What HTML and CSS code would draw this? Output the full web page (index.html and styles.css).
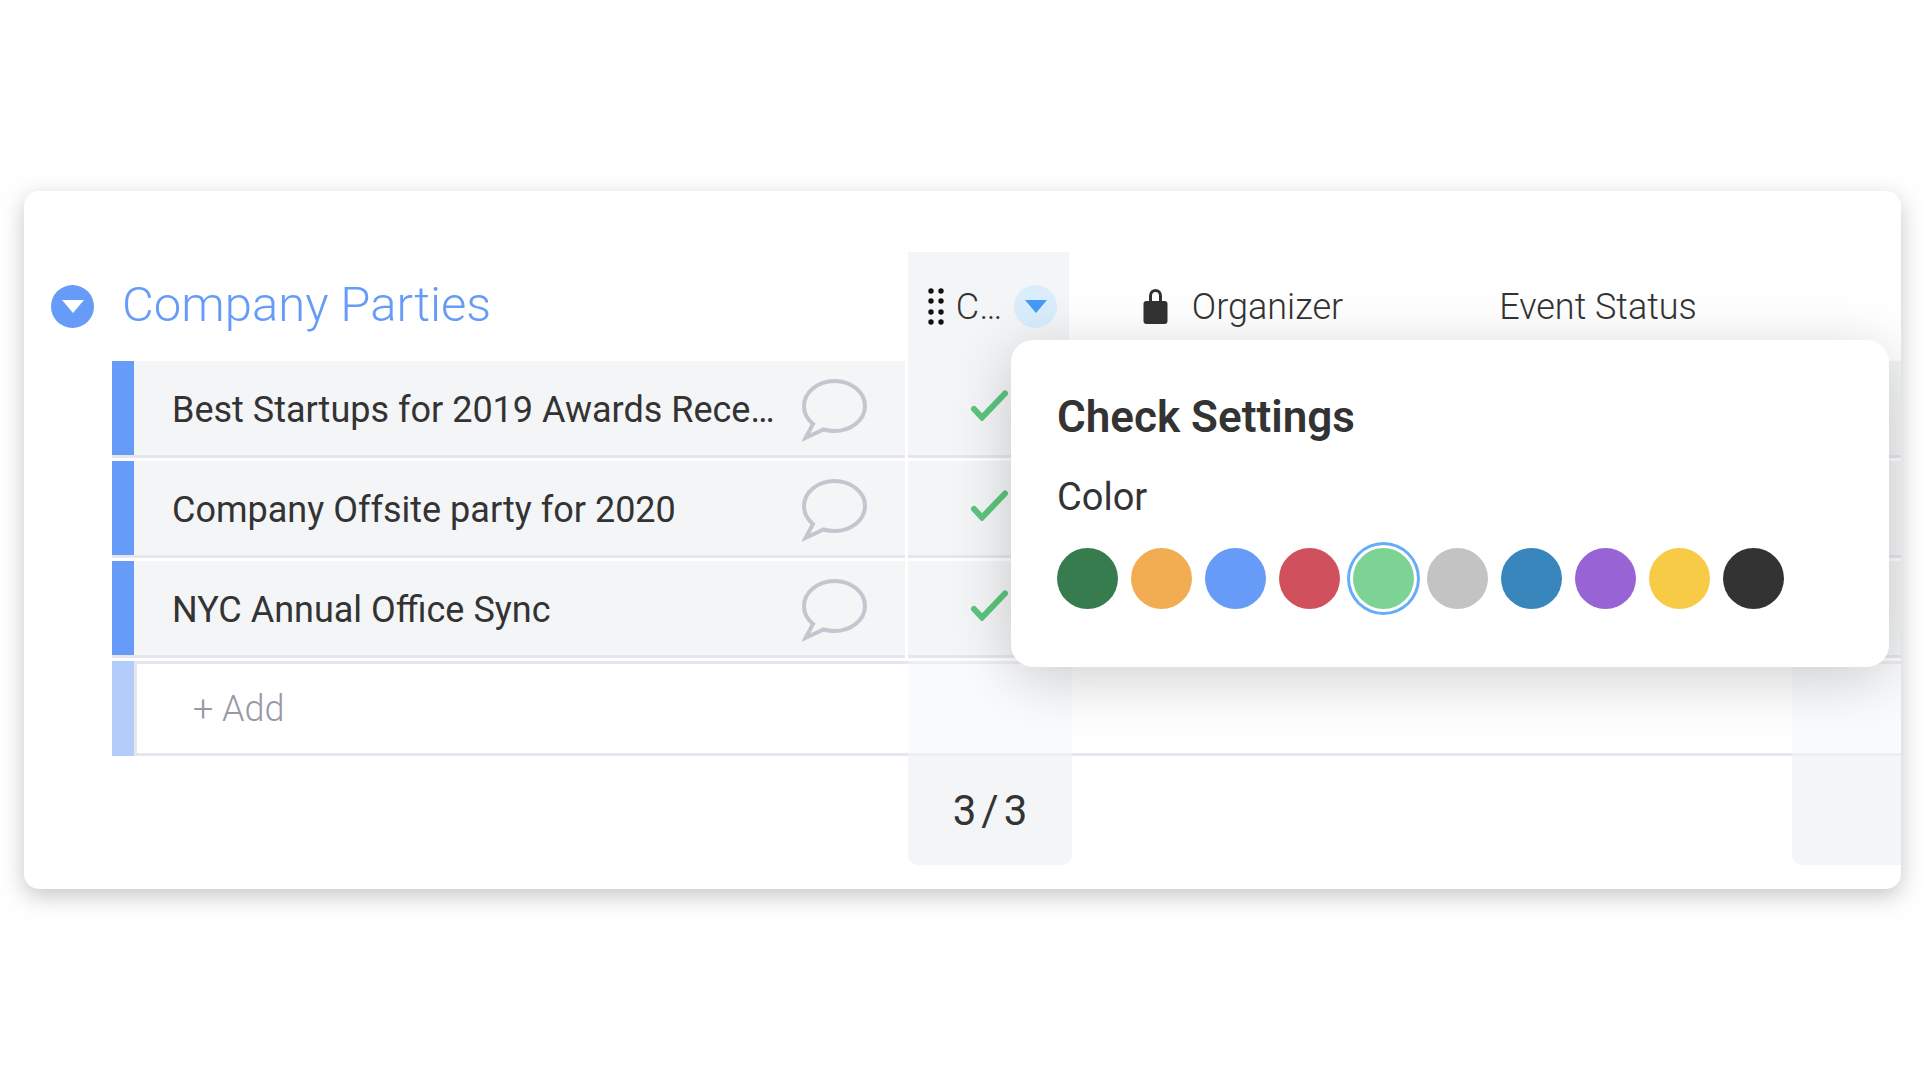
FILE: index.html
```html
<!DOCTYPE html>
<html lang="en">
<head>
    <meta charset="UTF-8">
    <title>Company Parties</title>
    <link rel="stylesheet" href="styles.css">
</head>
<body>

    <svg class="sprite" width="0" height="0">
        <symbol id="bubble" viewBox="0 0 65 63">
            <path d="M11 45 C5 40 2 34 2 27 C2 13 16 2 32.500 2 C49 2 63 13 63 27 C63 41 49 52 32.500 52 C28.500 52 25 51.500 21.500 50.500 L3.500 59 Z" fill="none" stroke="#c4c6cf" stroke-width="4"/>
        </symbol>
        <symbol id="check" viewBox="0 0 38 31">
            <path d="M4 19 L12 27.500 L35 3.500" fill="none" stroke="#5bc57d" stroke-width="6" stroke-linecap="round"/>
        </symbol>
    </svg>

    <main class="board">
        <table class="group">
            <colgroup>
                <col class="col-gutter">
                <col class="col-bar">
                <col class="col-name">
                <col class="col-check">
                <col class="col-organizer">
                <col class="col-status">
                <col class="col-last">
            </colgroup>
            <thead>
                <tr>
                    <th colspan="3">
                        <div class="group-title">
                            <button class="round-btn toggle" aria-label="Collapse group">
                                <svg width="24" height="13" viewBox="0 0 24 13"><path d="M1 0 H23 L12 13 Z" fill="#fff"/></svg>
                            </button>
                            <h1>Company Parties</h1>
                        </div>
                    </th>
                    <th class="head-check">
                        <div class="head">
                            <svg class="drag" width="16" height="38" viewBox="0 0 16 38" fill="#111">
                                <circle cx="3" cy="3" r="2.700"/><circle cx="13" cy="3" r="2.700"/>
                                <circle cx="3" cy="13" r="2.700"/><circle cx="13" cy="13" r="2.700"/>
                                <circle cx="3" cy="24" r="2.700"/><circle cx="13" cy="24" r="2.700"/>
                                <circle cx="3" cy="34" r="2.700"/><circle cx="13" cy="34" r="2.700"/>
                            </svg>
                            <span>C…</span>
                            <button class="round-btn menu" aria-label="Column menu">
                                <svg width="24" height="13" viewBox="0 0 24 13"><path d="M1 0 H23 L12 13 Z" fill="#449af6"/></svg>
                            </button>
                        </div>
                    </th>
                    <th>
                        <div class="head organizer">
                            <svg width="25" height="37" viewBox="0 0 25 37">
                                <path d="M7.500 15 V8 C7.500 0.500 17.500 0.500 17.500 8 V15" fill="none" stroke="#333" stroke-width="3"/>
                                <rect x="0.500" y="13" width="24" height="23" rx="3" fill="#333"/>
                            </svg>
                            <span>Organizer</span>
                        </div>
                    </th>
                    <th><div class="head">Event Status</div></th>
                    <th></th>
                </tr>
            </thead>
            <tbody>
                <tr class="item">
                    <td></td>
                    <td class="bar"></td>
                    <td class="cell">
                        <div class="name">
                            <span>Best Startups for 2019 Awards Rece…</span>
                            <button class="chat" aria-label="Open updates"><svg width="65" height="63"><use href="#bubble"/></svg></button>
                        </div>
                    </td>
                    <td class="cell tick"><svg width="38" height="31"><use href="#check"/></svg></td>
                    <td class="cell"></td>
                    <td class="cell"></td>
                    <td class="cell"></td>
                </tr>
                <tr class="item">
                    <td></td>
                    <td class="bar"></td>
                    <td class="cell">
                        <div class="name">
                            <span>Company Offsite party for 2020</span>
                            <button class="chat" aria-label="Open updates"><svg width="65" height="63"><use href="#bubble"/></svg></button>
                        </div>
                    </td>
                    <td class="cell tick"><svg width="38" height="31"><use href="#check"/></svg></td>
                    <td class="cell"></td>
                    <td class="cell"></td>
                    <td class="cell"></td>
                </tr>
                <tr class="item">
                    <td></td>
                    <td class="bar"></td>
                    <td class="cell">
                        <div class="name">
                            <span>NYC Annual Office Sync</span>
                            <button class="chat" aria-label="Open updates"><svg width="65" height="63"><use href="#bubble"/></svg></button>
                        </div>
                    </td>
                    <td class="cell tick"><svg width="38" height="31"><use href="#check"/></svg></td>
                    <td class="cell"></td>
                    <td class="cell"></td>
                    <td class="cell"></td>
                </tr>
                <tr class="add">
                    <td></td>
                    <td class="bar-light"></td>
                    <td class="line first"><input class="add-input" type="text" placeholder="+ Add" aria-label="Add item"></td>
                    <td class="line tint"></td>
                    <td class="line"></td>
                    <td class="line"></td>
                    <td class="line tint"></td>
                </tr>
            </tbody>
            <tfoot>
                <tr>
                    <td colspan="3"></td>
                    <td class="sum">
                        <div class="count"><span>3</span><span>/</span><span>3</span></div>
                    </td>
                    <td colspan="2"></td>
                    <td class="sum last"></td>
                </tr>
            </tfoot>
        </table>

        <section class="settings">
            <h2>Check Settings</h2>
            <fieldset>
                <legend>Color</legend>
                <div class="colors">
                    <input type="radio" name="color" class="swatch dark-green" aria-label="Dark green">
                    <input type="radio" name="color" class="swatch orange" aria-label="Orange">
                    <input type="radio" name="color" class="swatch blue" aria-label="Blue">
                    <input type="radio" name="color" class="swatch red" aria-label="Red">
                    <input type="radio" name="color" class="swatch green" aria-label="Green" checked>
                    <input type="radio" name="color" class="swatch gray" aria-label="Gray">
                    <input type="radio" name="color" class="swatch dark-blue" aria-label="Dark blue">
                    <input type="radio" name="color" class="swatch purple" aria-label="Purple">
                    <input type="radio" name="color" class="swatch yellow" aria-label="Yellow">
                    <input type="radio" name="color" class="swatch black" aria-label="Black">
                </div>
            </fieldset>
        </section>
    </main>

</body>
</html>
```

FILE: styles.css
```css
* {
    box-sizing: border-box;
}
body {
    margin: 0;
    padding: 0 24px;
    min-height: 100vh;
    display: flex;
    align-items: center;
    background-color: #fefefe;
    font-family: Roboto, sans-serif;
    font-size: 36px;
    color: #333;
}
button {
    border: none;
    padding: 0;
    background: none;
    cursor: pointer;
}
svg {
    display: block;
}
.sprite {
    position: absolute;
}
.board {
    position: relative;
    flex: 1;
    padding: 61px 0 24px;
    background-color: #fff;
    border-radius: 15px;
    box-shadow: 0 7px 22px rgba(0, 0, 0, 0.22);
    overflow: hidden;
}

/* table */
.group {
    width: 100%;
    table-layout: fixed;
    border-collapse: separate;
    border-spacing: 0;
}
.col-gutter {
    width: 88px;
}
.col-bar {
    width: 22px;
}
.col-name {
    width: 774px;
}
.col-check {
    width: 164px;
}
.col-organizer {
    width: 332px;
}
.col-last {
    width: 109px;
}
th, td {
    padding: 0;
}
th {
    height: 109px;
    font-weight: 300;
}
.group-title {
    display: flex;
    align-items: center;
    gap: 28px;
    padding-left: 27px;
}
h1 {
    margin: 0;
    padding-bottom: 4px;
    font-size: 49px;
    font-weight: 300;
    line-height: 60px;
    color: #669bf7;
}
.round-btn {
    width: 43px;
    height: 43px;
    border-radius: 50%;
    display: flex;
    align-items: center;
    justify-content: center;
}
.toggle {
    background-color: #669bf7;
}
.menu {
    background-color: #d9edfd;
}
.head {
    display: flex;
    align-items: center;
    justify-content: center;
    line-height: 44px;
}
.head-check {
    background-color: #f4f5f7;
    background-clip: padding-box;
    border-right: 3px solid transparent;
}
.head-check .head {
    gap: 12px;
    padding-left: 8px;
}
.organizer {
    gap: 24px;
    padding-left: 10px;
}

/* items */
.item td {
    height: 100px;
    border-bottom: 3px solid #fff;
}
.bar {
    background-color: #669bf7;
    box-shadow: inset 0 -3px #e6e7ee;
}
.cell {
    background-color: #f4f5f7;
    border-right: 3px solid #fff;
    box-shadow: inset 0 -3px #e6e7ee;
}
.cell:last-child {
    border-right: none;
}
.name {
    display: flex;
    align-items: center;
    justify-content: space-between;
    padding: 1px 38px 0;
    line-height: 44px;
    white-space: nowrap;
}
.tick svg {
    margin: 0 auto 8px;
}

/* add row */
.add td {
    height: 95px;
}
.bar-light {
    background-color: #b2cdf9;
}
.line {
    border-top: 3px solid #e6e7ee;
    border-bottom: 3px solid #e6e7ee;
}
.first {
    border-left: 3px solid #e6e7ee;
}
.tint {
    background-color: #fafbfd;
    border-color: #edeef2;
}
.add-input {
    width: 100%;
    height: 44px;
    border: none;
    outline: none;
    padding: 0 0 0 56px;
    background: none;
    font: 300 36px Roboto, sans-serif;
    color: #333;
}
.add-input::placeholder {
    color: #9799a6;
    opacity: 1;
}

/* summary */
.sum {
    height: 109px;
    background-color: #f4f5f7;
    border-radius: 0 0 10px 10px;
}
.last {
    border-radius: 0 0 0 10px;
}
.count {
    display: flex;
    justify-content: center;
    gap: 5px;
    font-size: 42px;
}

/* settings popup, opened over the table */
.settings {
    position: absolute;
    top: 149px;
    left: 987px;
    right: 12px;
    padding: 51px 46px 58px;
    background-color: #fff;
    border-radius: 22px;
    box-shadow: 0 12px 60px rgba(0, 0, 0, 0.19);
}
h2 {
    margin: 0 0 32px;
    font-size: 44px;
    font-weight: 600;
    line-height: 52px;
}
fieldset {
    margin: 0;
    padding: 0;
    border: none;
}
legend {
    padding: 0;
    font-size: 38px;
    line-height: 45px;
}
.colors {
    display: flex;
    gap: 13px;
    margin-top: 28px;
}
.swatch {
    appearance: none;
    width: 61px;
    height: 61px;
    margin: 0;
    border-radius: 50%;
    cursor: pointer;
}
.swatch:checked {
    box-shadow: 0 0 0 3px #fff, 0 0 0 6px #66adf9;
}
.dark-green {
    background-color: #367c4f;
}
.orange {
    background-color: #f2ad52;
}
.blue {
    background-color: #669bf7;
}
.red {
    background-color: #d0505d;
}
.green {
    background-color: #7dd394;
}
.gray {
    background-color: #c3c3c3;
}
.dark-blue {
    background-color: #3886bc;
}
.purple {
    background-color: #9864d5;
}
.yellow {
    background-color: #f7cb45;
}
.black {
    background-color: #333;
}
```
